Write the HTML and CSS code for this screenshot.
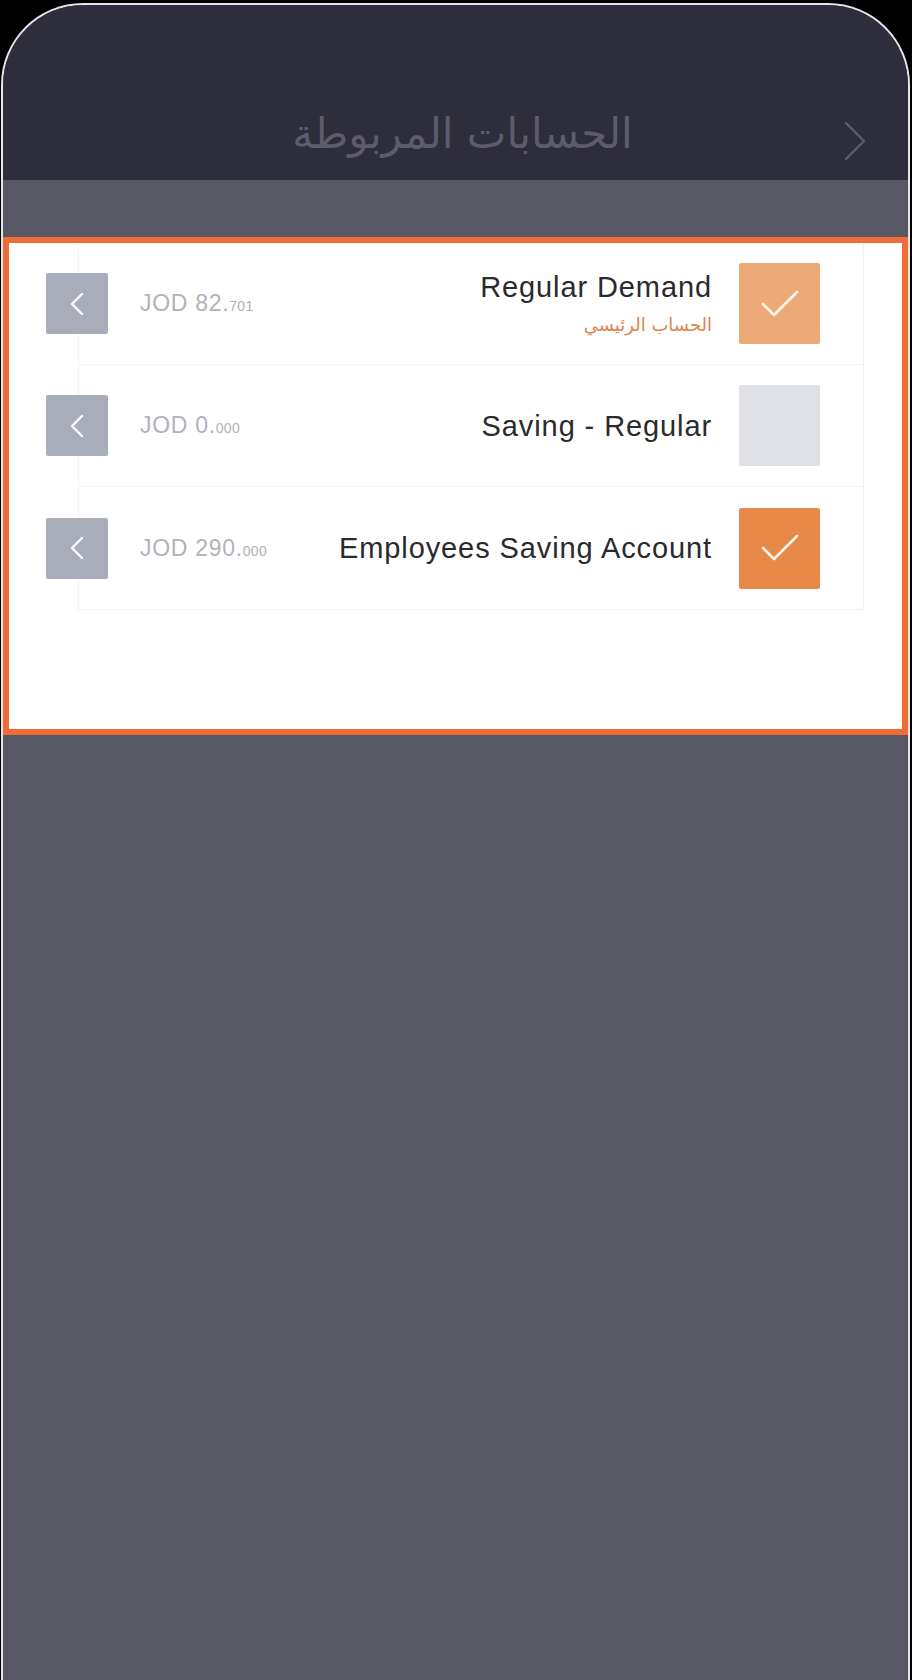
FILE: index.html
```html
<!DOCTYPE html>
<html lang="ar">
<head>
<meta charset="utf-8">
<title>الحسابات المربوطة</title>
<link rel="stylesheet" href="styles.css">
</head>
<body>
<div class="phone">
  <header class="header">
    <h1 class="title">الحسابات المربوطة</h1>
    <svg class="nav-chevron" width="24" height="40" viewBox="0 0 24 40"><polyline points="3,2 21,20 3,38" fill="none" stroke="#5d5c6a" stroke-width="2.4" stroke-linecap="round" stroke-linejoin="round"/></svg>
  </header>
  <div class="band"></div>
  <section class="panel">
    <div class="card">
      <div class="row">
        <button class="reveal"><svg width="16" height="24" viewBox="0 0 16 24"><polyline points="13,2 3,12 13,22" fill="none" stroke="#fff" stroke-width="2.4" stroke-linecap="round" stroke-linejoin="round"/></svg></button>
        <div class="amount">JOD 82.<span class="dec">701</span></div>
        <div class="info">
          <div class="name">Regular Demand</div>
          <div class="primary">الحساب الرئيسي</div>
        </div>
        <div class="check check-light"><svg width="40" height="32" viewBox="0 0 40 32"><polyline points="3,16 14,27 37,4" fill="none" stroke="#fff6ea" stroke-width="2.6" stroke-linecap="round" stroke-linejoin="round"/></svg></div>
      </div>
      <div class="row">
        <button class="reveal"><svg width="16" height="24" viewBox="0 0 16 24"><polyline points="13,2 3,12 13,22" fill="none" stroke="#fff" stroke-width="2.4" stroke-linecap="round" stroke-linejoin="round"/></svg></button>
        <div class="amount">JOD 0.<span class="dec">000</span></div>
        <div class="info">
          <div class="name">Saving - Regular</div>
        </div>
        <div class="check check-off"></div>
      </div>
      <div class="row">
        <button class="reveal"><svg width="16" height="24" viewBox="0 0 16 24"><polyline points="13,2 3,12 13,22" fill="none" stroke="#fff" stroke-width="2.4" stroke-linecap="round" stroke-linejoin="round"/></svg></button>
        <div class="amount">JOD 290.<span class="dec">000</span></div>
        <div class="info">
          <div class="name">Employees Saving Account</div>
        </div>
        <div class="check check-on"><svg width="40" height="32" viewBox="0 0 40 32"><polyline points="3,16 14,27 37,4" fill="none" stroke="#fff6ea" stroke-width="2.6" stroke-linecap="round" stroke-linejoin="round"/></svg></div>
      </div>
    </div>
  </section>
</div>
</body>
</html>
```
FILE: styles.css
```css
html, body {
  margin: 0;
  padding: 0;
  background: #000;
}
body {
  font-family: "Liberation Sans", Arial, sans-serif;
  overflow: hidden;
}
.phone {
  margin: 3px 2px 0 1px;
  height: 1677px;
  border: 2px solid #e6e6ec;
  border-bottom: none;
  border-radius: 82px 82px 0 0;
  overflow: hidden;
  background: #585864;
  box-sizing: border-box;
}
.header {
  height: 175px;
  background: #2e2d3b;
  display: flex;
  align-items: flex-end;
  justify-content: center;
  position: relative;
  padding-bottom: 25px;
  box-sizing: border-box;
}
.title {
  margin: 0 0 0 14px;
  font-family: "DejaVu Sans", sans-serif;
  font-weight: normal;
  font-size: 42px;
  color: #5d5c6a;
  line-height: 1;
  direction: rtl;
}
.nav-chevron {
  position: absolute;
  right: 41px;
  top: 116px;
}
.band {
  height: 57px;
  background: #585864;
}
.panel {
  height: 498px;
  box-sizing: border-box;
  border: 6px solid #f06b35;
  background: #fff;
  padding: 0 38px 0 69px;
}
.card {
  border: 1px solid #f2f2f4;
  border-top: none;
}
.row {
  height: 122px;
  box-sizing: border-box;
  border-bottom: 1px solid #f2f2f4;
  display: flex;
  align-items: center;
  padding-right: 43px;
}
.row:last-child {
  border-bottom: none;
}
.reveal {
  width: 62px;
  height: 61px;
  margin-left: -33px;
  border: none;
  border-radius: 2px;
  background: #a9adba;
  display: flex;
  align-items: center;
  justify-content: center;
  padding: 0;
  flex: none;
}
.amount {
  margin-left: 32px;
  font-size: 23px;
  letter-spacing: 0.7px;
  color: #b2b2ba;
  white-space: nowrap;
}
.dec {
  font-size: 14px;
  letter-spacing: 0.3px;
}
.info {
  flex: 1;
  text-align: right;
  padding-right: 27px;
}
.name {
  font-size: 29px;
  letter-spacing: 0.9px;
  color: #2a2a2c;
  line-height: 32px;
}
.primary {
  margin-top: 10px;
  font-family: "DejaVu Sans", sans-serif;
  font-size: 18px;
  color: #d9864f;
  direction: rtl;
  line-height: 24px;
}
.check {
  width: 81px;
  height: 81px;
  border-radius: 2px;
  flex: none;
  display: flex;
  align-items: center;
  justify-content: center;
}
.check-light { background: #eea978; }
.check-on { background: #e8894a; }
.check-off { background: #dfe1e6; }
```
